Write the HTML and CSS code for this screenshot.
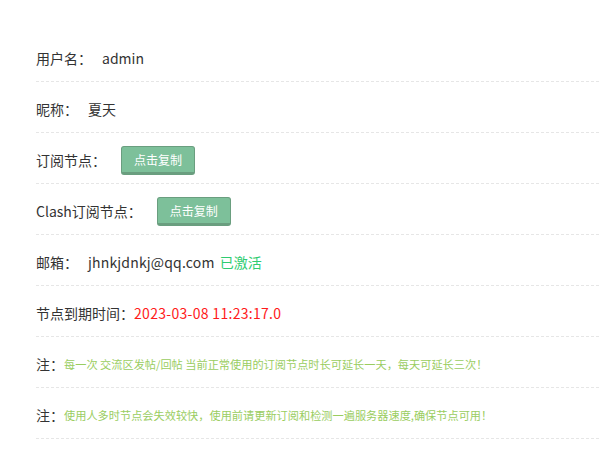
FILE: index.html
```html
<!DOCTYPE html>
<html lang="zh-CN">
<head>
    <meta charset="UTF-8">
    <title>用户信息</title>
    <link rel="stylesheet" href="styles.css">
</head>
<body>
    <ul class="info-list">
        <li class="info-row">
            <span class="label">用户名：</span>
            <span class="value">admin</span>
        </li>
        <li class="info-row">
            <span class="label">昵称：</span>
            <span class="value">夏天</span>
        </li>
        <li class="info-row">
            <span class="label">订阅节点：</span>
            <button class="copy-btn">点击复制</button>
        </li>
        <li class="info-row">
            <span class="label">Clash订阅节点：</span>
            <button class="copy-btn">点击复制</button>
        </li>
        <li class="info-row">
            <span class="label">邮箱：</span>
            <span class="value email">jhnkjdnkj@qq.com</span>
            <span class="status">已激活</span>
        </li>
        <li class="info-row">
            <span class="label">节点到期时间：</span><span class="expire">2023-03-08 11:23:17.0</span>
        </li>
        <li class="info-row">
            <span class="label">注：</span><span class="note">每一次 交流区发帖/回帖 当前正常使用的订阅节点时长可延长一天，每天可延长三次！</span>
        </li>
        <li class="info-row">
            <span class="label">注：</span><span class="note">使用人多时节点会失效较快，使用前请更新订阅和检测一遍服务器速度,确保节点可用！</span>
        </li>
    </ul>
</body>
</html>
```

FILE: styles.css
```css
* {
    margin: 0;
    padding: 0;
    box-sizing: border-box;
}
body {
    background-color: #fff;
    font-family: "Noto Sans CJK SC", "Noto Sans", sans-serif;
    font-size: 14px;
    color: #333;
    padding: 31px 0 0 36px;
}
.info-list {
    list-style: none;
}
.info-row {
    display: flex;
    align-items: center;
    height: 51px;
    padding-top: 4px;
    border-bottom: 1px dashed #e6e6e6;
    line-height: 20px;
}
.label {
    color: #333;
}
.value {
    margin-left: 10px;
    color: #333;
}
.email {
    letter-spacing: 0.2px;
}
.status {
    margin-left: 5px;
    color: #2ecc71;
}
.expire {
    color: #ff1a1a;
    letter-spacing: 0.3px;
}
.note {
    font-size: 11.2px;
    color: #9acd5f;
}
.copy-btn {
    margin-left: 15px;
    width: 74px;
    height: 29px;
    border: 1px solid #6a9e7f;
    border-bottom: 3px solid #6a9e7f;
    border-radius: 3px;
    background-color: #7dc09a;
    color: #fff;
    font-family: inherit;
    font-size: 12px;
    cursor: pointer;
}
```
